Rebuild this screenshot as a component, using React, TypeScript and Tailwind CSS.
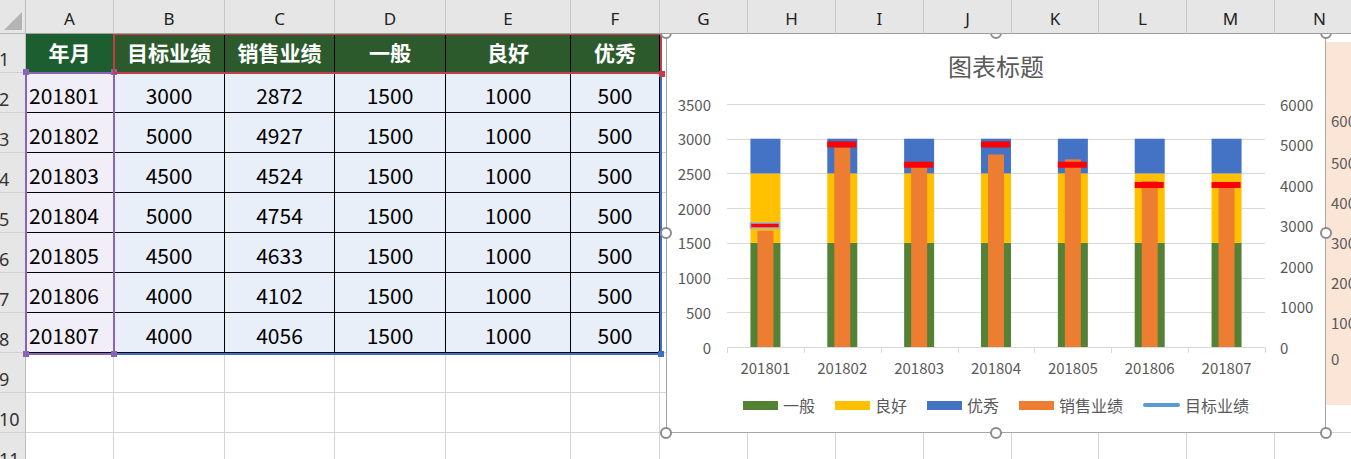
const LETTERS = ["A", "B", "C", "D", "E", "F", "G", "H", "I", "J", "K", "L", "M", "N"];
const HEADERS = ["年月", "目标业绩", "销售业绩", "一般", "良好", "优秀"];

const DATA: [string, number, number][] = [
  ["201801", 3000, 2872],
  ["201802", 5000, 4927],
  ["201803", 4500, 4524],
  ["201804", 5000, 4754],
  ["201805", 4500, 4633],
  ["201806", 4000, 4102],
  ["201807", 4000, 4056],
];

const GRAY = "#595959";

function Cell({ r, c }: { r: number; c: number }) {
  if (r === 1 && c < 6) {
    return (
      <div
        className={`flex items-center justify-center border-r border-b border-black text-[21px] font-bold text-white ${
          c === 0 ? "bg-[#1d5e30]" : "bg-[#2c5a2d]"
        }`}
      >
        {HEADERS[c]}
      </div>
    );
  }
  if (r >= 2 && r <= 8 && c < 6) {
    const row = DATA[r - 2];
    const vals = [row[0], row[1], row[2], 1500, 1000, 500];
    return (
      <div
        className={`flex items-center border-r border-b border-black pt-[6px] text-[21px] text-black ${
          c === 0 ? "justify-start bg-[#f1eef8] pl-[3px]" : "justify-center bg-[#e9eff9]"
        }`}
      >
        {vals[c]}
      </div>
    );
  }
  return <div className="border-r border-b border-[#d4d4d4]" />;
}

function Handle() {
  return <span className="block h-[12px] w-[12px] rounded-full border-2 border-[#8c8c8c] bg-white" />;
}

// the eight sizing handles round the selected chart
function Handles() {
  return (
    <div className="pointer-events-none absolute -inset-[7px] flex flex-col justify-between">
      <div className="flex justify-between">
        <Handle />
        <Handle />
        <Handle />
      </div>
      <div className="flex justify-between">
        <Handle />
        <Handle />
      </div>
      <div className="flex justify-between">
        <Handle />
        <Handle />
        <Handle />
      </div>
    </div>
  );
}

function Plot() {
  const x0 = 60;
  const x1 = 598;
  const cw = (x1 - x0) / 7;
  const y0 = 257;
  const k1 = 243 / 3500;
  const k2 = 243 / 6000;
  const left = [0, 500, 1000, 1500, 2000, 2500, 3000, 3500];
  const right = [0, 1000, 2000, 3000, 4000, 5000, 6000];

  return (
    <svg width={658} height={294} className="block">
      {left.map((v) => (
        <line key={v} x1={x0} x2={x1} y1={Math.round(y0 - v * k1) + 0.5} y2={Math.round(y0 - v * k1) + 0.5} stroke="#d9d9d9" />
      ))}
      {Array.from({ length: 8 }).map((_, i) => (
        <line key={i} x1={Math.round(x0 + i * cw) + 0.5} x2={Math.round(x0 + i * cw) + 0.5} y1={y0} y2={y0 + 6} stroke="#d9d9d9" />
      ))}
      {left.map((v) => (
        <text key={v} x={44} y={y0 - v * k1} textAnchor="end" dominantBaseline="central" fontSize={15} fill={GRAY}>
          {v}
        </text>
      ))}
      {right.map((v) => (
        <text key={v} x={613} y={y0 - v * k2} textAnchor="start" dominantBaseline="central" fontSize={15} fill={GRAY}>
          {v}
        </text>
      ))}
      {DATA.map(([label, target, sales], i) => {
        const cx = x0 + cw * (i + 0.5);
        const ty = y0 - target * k2;
        return (
          <g key={label}>
            <rect x={cx - 15} y={y0 - 1500 * k1} width={30} height={1500 * k1} fill="#548235" />
            <rect x={cx - 15} y={y0 - 2500 * k1} width={30} height={1000 * k1} fill="#ffc000" />
            <rect x={cx - 15} y={y0 - 3000 * k1} width={30} height={500 * k1} fill="#4472c4" />
            <rect x={cx - 8} y={y0 - sales * k2} width={16} height={sales * k2} fill="#ed7d31" />
            {i === 0 ? (
              <rect x={cx - 15} y={ty - 2.5} width={29} height={5} fill="#ff0000" stroke="#8fb4e0" strokeWidth={1.5} />
            ) : (
              <rect x={cx - 15} y={ty - 3} width={29} height={6} fill="#ff0000" />
            )}
            <text x={cx} y={y0 + 20} textAnchor="middle" dominantBaseline="central" fontSize={15} fill={GRAY}>
              {label}
            </text>
          </g>
        );
      })}
    </svg>
  );
}

function Legend() {
  const items = [
    { name: "一般", color: "bg-[#548235]" },
    { name: "良好", color: "bg-[#ffc000]" },
    { name: "优秀", color: "bg-[#4472c4]" },
    { name: "销售业绩", color: "bg-[#ed7d31]" },
  ];
  return (
    <div className="flex h-[48px] items-center justify-center gap-[20px] pb-[6px] text-[16px] text-[#595959]">
      {items.map((it) => (
        <div key={it.name} className="flex items-center gap-[5px]">
          <span className={`h-[9px] w-[35px] ${it.color}`} />
          <span>{it.name}</span>
        </div>
      ))}
      <div className="flex items-center gap-[5px]">
        <span className="h-[4px] w-[37px] rounded-full bg-[#5b9bd5]" />
        <span>目标业绩</span>
      </div>
    </div>
  );
}

function Square({ color }: { color: string }) {
  return <span className={`block h-[6px] w-[6px] ${color}`} />;
}

export default function App() {
  const rows = Array.from({ length: 11 }, (_, i) => i + 1);

  return (
    <div className="relative h-[459px] w-[1351px] overflow-hidden bg-white font-['Noto_Sans_CJK_SC','Noto_Sans',sans-serif]">
      <div className="grid w-max grid-cols-[26px_88px_111px_110px_111px_125px_89px_88px_88px_88px_88px_87px_88px_88px_90px] grid-rows-[34px_39px_repeat(10,40px)]">
        <div className="relative z-30 border-r border-b border-[#bdbdbd] bg-[#e6e6e6]">
          <svg width={25} height={33} className="block">
            <polygon points="22,12 22,30 4,30" fill="#b4b4b4" />
          </svg>
        </div>
        {LETTERS.map((l) => (
          <div
            key={l}
            className="relative z-30 flex items-center justify-center border-r border-b border-r-[#c8c8c8] border-b-[#9e9e9e] bg-[#e6e6e6] pt-[5px] font-['Noto_Sans',sans-serif] text-[17px] text-[#222]"
          >
            {l}
          </div>
        ))}
        {rows.map((r) => (
          <div key={r} className="contents">
            <div className="flex items-end border-r border-b border-r-[#bdbdbd] border-b-[#d0d0d0] bg-[#e6e6e6] pb-[4px] font-['Noto_Sans',sans-serif] text-[18px] leading-none text-[#333]">
              <span className="-ml-px">{r}</span>
            </div>
            {LETTERS.map((_, c) => (
              <Cell key={c} r={r} c={c} />
            ))}
          </div>
        ))}
      </div>

      {/* selection outlines */}
      <div className="pointer-events-none absolute left-[113px] top-[72px] z-10 h-[283px] w-[549px] border-2 border-[#3d6fc8]">
        <div className="absolute -right-[4px] -bottom-[4px]">
          <Square color="bg-[#3d6fc8]" />
        </div>
      </div>
      <div className="pointer-events-none absolute left-[25px] top-[72px] z-10 flex h-[283px] w-[90px] flex-col justify-between border-2 border-[#8764b8]">
        <div className="-mx-[4px] -mt-[5px] flex justify-between">
          <Square color="bg-[#8764b8]" />
          <Square color="bg-[#8764b8]" />
        </div>
        <div className="-mx-[4px] -mb-[4px] flex justify-between">
          <Square color="bg-[#8764b8]" />
          <Square color="bg-[#8764b8]" />
        </div>
      </div>
      <div className="pointer-events-none absolute left-[113px] top-[33px] z-10 flex h-[41px] w-[549px] items-end justify-end border-2 border-[#c43c48]">
        <div className="-mr-[5px] -mb-[5px]">
          <Square color="bg-[#c43c48]" />
        </div>
      </div>

      {/* the selected chart, with a second chart peeking out at the right */}
      <div className="absolute left-[666px] top-[33px] z-10 flex">
        <div className="relative h-[400px] w-[660px] border border-[#a6a6a6] bg-white">
          <div className="flex h-[56px] items-center justify-center pt-[8px] text-[24px] text-[#595959]">图表标题</div>
          <Plot />
          <Legend />
          <Handles />
        </div>
        <div className="mt-px h-[398px] w-[40px] bg-white pt-[8px]">
          <div className="h-[363px] bg-[#fbe5d6]">
            <svg width={40} height={363} className="block">
              {[
                [6000, 78],
                [5000, 120],
                [4000, 160],
                [3000, 200],
                [2000, 240],
                [1000, 280],
                [0, 316],
              ].map(([v, y]) => (
                <text key={v} x={5} y={y} dominantBaseline="central" fontSize={15} fill={GRAY}>
                  {v}
                </text>
              ))}
            </svg>
          </div>
        </div>
      </div>
    </div>
  );
}
